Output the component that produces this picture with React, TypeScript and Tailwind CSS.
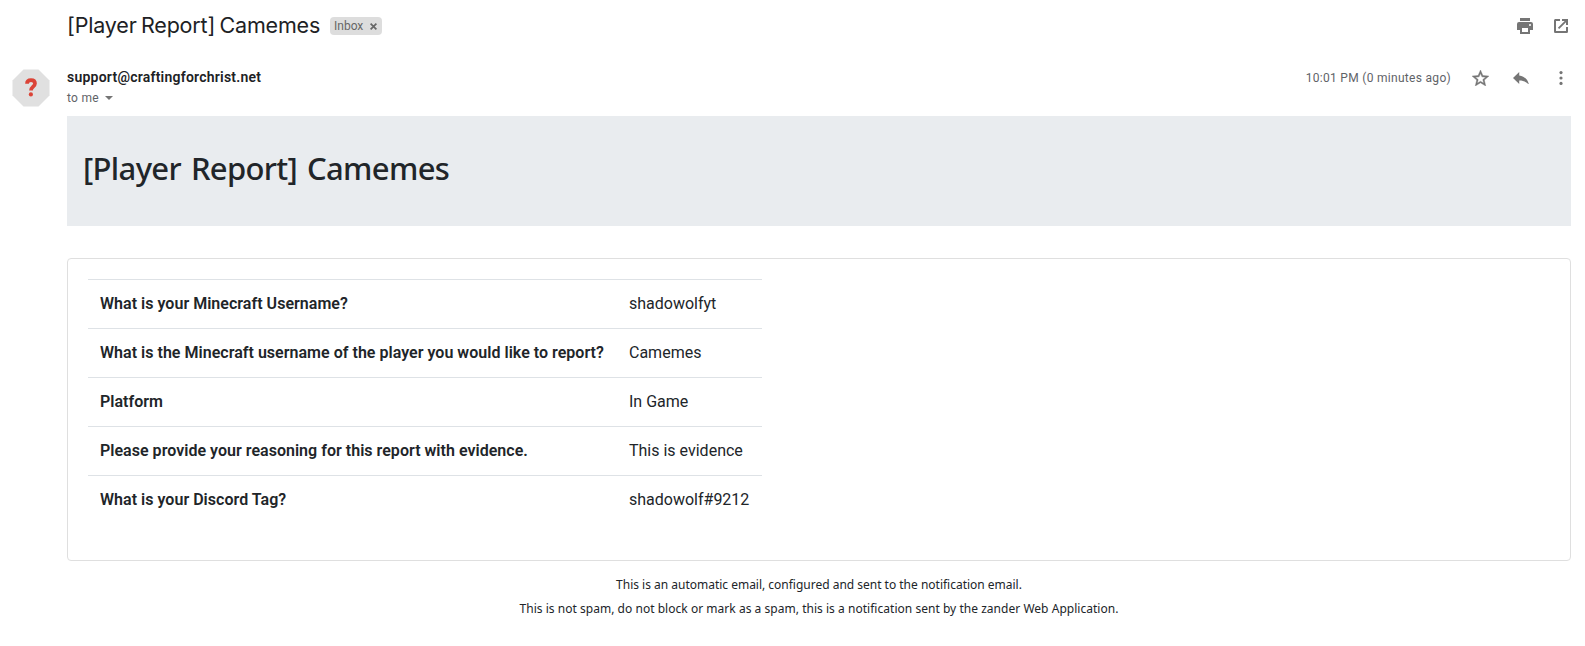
const ROWS: [string, string][] = [
  ["What is your Minecraft Username?", "shadowolfyt"],
  ["What is the Minecraft username of the player you would like to report?", "Camemes"],
  ["Platform", "In Game"],
  ["Please provide your reasoning for this report with evidence.", "This is evidence"],
  ["What is your Discord Tag?", "shadowolf#9212"],
];

function PrintIcon() {
  return (
    <svg viewBox="0 0 16 16" className="size-4 fill-[#757575]">
      <path d="M3 0h10v3H3z" />
      <path fillRule="evenodd" d="M2 4h12a2 2 0 0 1 2 2v6h-3v4H3v-4H0V6a2 2 0 0 1 2-2zm3 6v4h6v-4zm8-4a1 1 0 1 0 0 2 1 1 0 0 0 0-2z" />
    </svg>
  );
}

function OpenIcon() {
  return (
    <svg viewBox="0 0 14 14" className="size-3.5 fill-[#757575]">
      <path d="M12 12H2V2h4V0H1.600C.7 0 0 .7 0 1.600v10.800c0 .9.7 1.600 1.600 1.600h10.800c.9 0 1.600-.7 1.600-1.600V8h-2zM8 0v2h2.700L3.900 8.800l1.300 1.300L12 3.300V6h2V0z" />
    </svg>
  );
}

function StarIcon() {
  return (
    <svg viewBox="2 2 20 19" className="h-4 w-[17px] fill-[#757575] stroke-[#757575] stroke-[0.5]">
      <path d="M22 9.240l-7.190-.62L12 2 9.190 8.630 2 9.240l5.460 4.730L5.820 21 12 17.270 18.180 21l-1.630-7.030L22 9.240zM12 15.400l-3.760 2.270 1-4.280-3.320-2.880 4.380-.38L12 6.100l1.710 4.040 4.380.38-3.320 2.880 1 4.280L12 15.400z" />
    </svg>
  );
}

function ReplyIcon() {
  return (
    <svg viewBox="3 5 18 14" className="h-3 w-4 fill-[#757575]" preserveAspectRatio="none">
      <path d="M10 9V5l-7 7 7 7v-4.100c5 0 8.500 1.600 11 5.100-1-5-4-10-11-11z" />
    </svg>
  );
}

function MoreIcon() {
  return (
    <svg viewBox="0 0 4 14" className="h-3.5 w-1 fill-[#757575]">
      <circle cx="2" cy="1.600" r="1.600" />
      <circle cx="2" cy="7" r="1.600" />
      <circle cx="2" cy="12.400" r="1.600" />
    </svg>
  );
}

export default function App() {
  return (
    <div className="h-[646px] w-[1585px] overflow-hidden bg-white font-['Roboto',sans-serif] text-[#212529]">
      <header className="flex h-[52px] items-center pr-[17px] pl-[67px]">
        <h1 className="w-[255px] pb-0.5 font-['Inter',sans-serif] text-[21.5px] leading-7 font-normal tracking-[-0.18px] whitespace-nowrap text-[#202124] [word-spacing:-1.5px]">
          [Player Report] Camemes
        </h1>
        <div className="ml-2 flex h-[18px] w-[52px] items-center rounded-[4px] bg-[#ddd] pl-1 text-[12px] text-[#666]">
          <span className="w-[36px]">Inbox</span>
          <svg viewBox="0 0 7 7" className="mt-px size-[7px] stroke-[#666] stroke-[1.7]">
            <path d="M.6.6l5.800 5.800M6.400.6L.6 6.400" />
          </svg>
        </div>
        <div className="ml-auto flex items-center gap-[21px]">
          <PrintIcon />
          <OpenIcon />
        </div>
      </header>

      <section className="flex h-16 pl-3">
        <svg viewBox="0 0 38 38" className="mt-[17px] size-[38px] shrink-0">
          <path d="M11.500.5h15L37.500 11.500v15L26.500 37.500h-15L.5 26.500v-15z" fill="#e0e0e0" />
          <path d="M15 14.800c0-2.300 1.500-3.700 4-3.700s4 1.400 4 3.500c0 3-4 3.300-4 6.900" fill="none" stroke="#db4437" strokeWidth="3.700" />
          <circle cx="18.900" cy="25.400" r="2.100" fill="#db4437" />
        </svg>
        <div className="ml-[17px] flex flex-col pt-[15px]">
          <span className="text-[14px] leading-5 font-semibold tracking-[0.23px] text-[#202124]">support@craftingforchrist.net</span>
          <span className="mt-px flex items-center text-[12px] leading-5 tracking-[0.3px] text-[#5f6368]">
            to me
            <svg viewBox="0 0 8 4" className="ml-1.5 h-1 w-2 fill-[#757575]">
              <path d="M0 0h8L4 4z" />
            </svg>
          </span>
        </div>
        <div className="mt-[15px] mr-[22px] ml-auto flex h-[22px] items-center">
          <span className="mr-[21px] text-[12px] tracking-[0.3px] text-[#5f6368]">10:01 PM (0 minutes ago)</span>
          <StarIcon />
          <span className="ml-6 flex"><ReplyIcon /></span>
          <span className="ml-[30px] flex"><MoreIcon /></span>
        </div>
      </section>

      <main className="mr-3.5 ml-[67px]">
        <div className="h-[110px] bg-[#e9ecef] px-4 pt-[33px]">
          <h2 className="font-['Noto_Sans',sans-serif] text-[31px] leading-[38px] font-medium tracking-[-0.65px] [word-spacing:2.5px]">
            [Player Report] Camemes
          </h2>
        </div>

        <div className="mt-8 h-[303px] rounded-[4px] border border-[#dfdfdf] p-5">
          <table className="w-[674px] table-fixed border-collapse text-left text-[16px] leading-6">
            <tbody>
              {ROWS.map(([question, answer]) => (
                <tr key={question} className="h-[49px] border-t border-[#dee2e6]">
                  <th className="w-[529px] px-3 font-semibold tracking-[0.026px] whitespace-nowrap">{question}</th>
                  <td className="px-3 whitespace-nowrap">{answer}</td>
                </tr>
              ))}
            </tbody>
          </table>
        </div>

        <footer className="mt-3 text-center font-['Noto_Sans',sans-serif] text-[12px] leading-6">
          <p className="tracking-[-0.01px]">This is an automatic email, configured and sent to the notification email.</p>
          <p className="tracking-[0.03px]">This is not spam, do not block or mark as a spam, this is a notification sent by the zander Web Application.</p>
        </footer>
      </main>
    </div>
  );
}
